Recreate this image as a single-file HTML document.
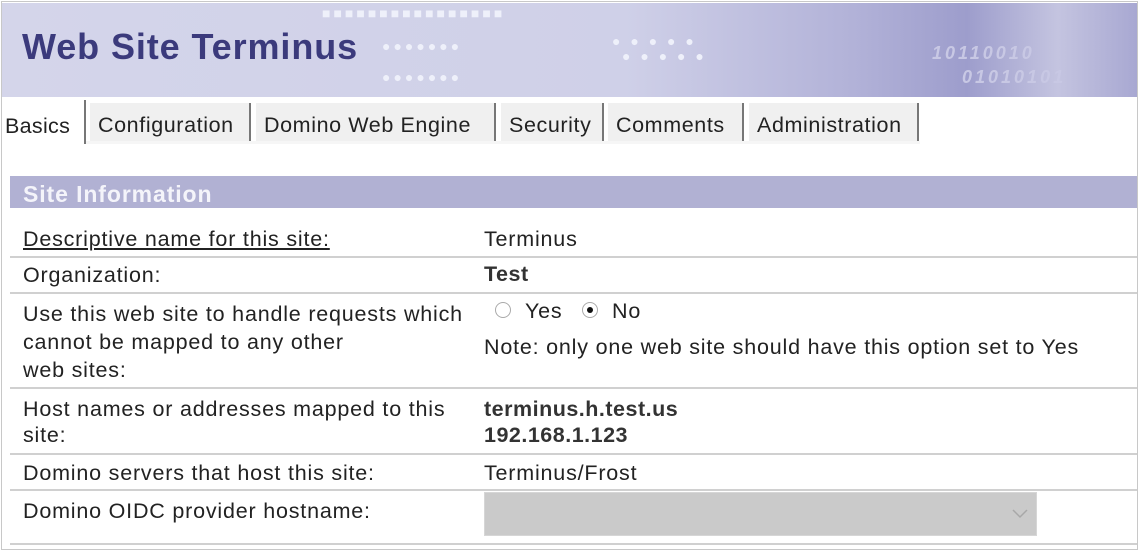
<!DOCTYPE html>
<html><head><meta charset="utf-8"><style>
*{margin:0;padding:0;box-sizing:border-box}
body{width:1140px;height:552px;background:#fff;font-family:"Liberation Sans",Arial,sans-serif;position:relative;overflow:hidden;color:#222}
.frame{position:absolute;left:1px;top:1px;width:1137px;height:549px;border:1px solid #c8c8c8}
.banner{position:absolute;left:2px;top:3px;width:1135px;height:94px;background:linear-gradient(90deg,#d4d5ea 0%,#cfd0e8 55%,#b2b2d8 75%,#9d9dcc 85%,#c4c4e0 93%,#a8a8d2 100%)}
.dots{position:absolute;color:#eef0fa;font-size:14px;letter-spacing:3px;font-weight:bold}
.title{position:absolute;left:22px;top:26px;font-size:36px;letter-spacing:0.9px;font-weight:bold;color:#3b3a7c}
.tab{position:absolute;top:103px;height:38px;background:#f0f0f0;font-size:21.5px;letter-spacing:0.6px;line-height:44px;padding-left:8px;border-right:2px solid #777;color:#222;white-space:nowrap;overflow:hidden}
.bar{position:absolute;left:10px;top:176px;width:1127px;height:32px;background:#b1b1d3;color:#f4f4fa;font-size:23px;letter-spacing:0.9px;font-weight:bold;line-height:36px;padding-left:13px}
.line{position:absolute;left:10px;width:1127px;height:2px;background:#d0d0d0}
.t{position:absolute;font-size:21.5px;letter-spacing:0.8px;line-height:26px;white-space:nowrap}
.b{font-weight:bold;color:#333;letter-spacing:0.5px}
.radio{position:absolute;width:16px;height:16px;border-radius:50%;border:1px solid #aaa;background:#fff}
.radio.on::after{content:"";position:absolute;left:4px;top:4px;width:6px;height:6px;border-radius:50%;background:#111}
</style></head><body>
<div class="frame"></div>
<div class="banner">
<div class="dots" style="left:380px;top:35px">●●●●●●●</div>
<div class="dots" style="left:380px;top:66px">●●●●●●●</div>
<div class="dots" style="left:320px;top:2px">■■■■■■■■■■■■■■■■</div>
<div class="dots" style="left:610px;top:30px">● ● ● ● ●</div>
<div class="dots" style="left:620px;top:45px">● ● ● ● ●</div>
<div class="dots" style="left:930px;top:40px;color:#c8c8e4;font-style:italic;font-size:18px">10110010</div>
<div class="dots" style="left:960px;top:64px;color:#c8c8e4;font-style:italic;font-size:18px">01010101</div>
</div>
<div class="title">Web Site Terminus</div>
<div style="position:absolute;left:2px;top:100px;width:84px;height:44px;background:#fff;border-right:2px solid #777"></div>
<div class="t" style="left:5px;top:113px;letter-spacing:0.3px">Basics</div>
<div class="tab" style="left:90px;width:161px">Configuration</div>
<div class="tab" style="left:256px;width:240px">Domino Web Engine</div>
<div class="tab" style="left:501px;width:103px">Security</div>
<div class="tab" style="left:608px;width:136px">Comments</div>
<div class="tab" style="left:749px;width:170px">Administration</div>
<div style="position:absolute;left:86px;top:141px;width:834px;height:3px;background:#f6f6f6"></div>
<div class="bar">Site Information</div>

<div class="t" style="left:23px;top:226px;text-decoration:underline">Descriptive name for this site:</div>
<div class="t" style="left:484px;top:226px">Terminus</div>
<div class="line" style="top:256px"></div>
<div class="t" style="left:23px;top:262px">Organization:</div>
<div class="t b" style="left:484px;top:261px">Test</div>
<div class="line" style="top:292px"></div>
<div class="t" style="left:23px;top:300px;line-height:28px">Use this web site to handle requests which<br>cannot be mapped to any other<br>web sites:</div>
<span class="radio" style="left:495px;top:302px"></span>
<div class="t" style="left:525px;top:298px">Yes</div>
<span class="radio on" style="left:582px;top:302px"></span>
<div class="t" style="left:612px;top:298px">No</div>
<div class="t" style="left:484px;top:334px">Note: only one web site should have this option set to Yes</div>
<div class="line" style="top:387px"></div>
<div class="t" style="left:23px;top:396px">Host names or addresses mapped to this<br>site:</div>
<div class="t b" style="left:484px;top:396px">terminus.h.test.us<br>192.168.1.123</div>
<div class="line" style="top:453px"></div>
<div class="t" style="left:23px;top:460px">Domino servers that host this site:</div>
<div class="t" style="left:484px;top:460px">Terminus/Frost</div>
<div class="line" style="top:489px"></div>
<div class="t" style="left:23px;top:498px">Domino OIDC provider hostname:</div>
<div style="position:absolute;left:484px;top:492px;width:553px;height:44px;background:#cacaca;border:1px solid #d6d6d6">
<svg style="position:absolute;right:8px;top:16px" width="16" height="10"><path d="M1 1 L8 8 L15 1" stroke="#a8a8a8" stroke-width="1.5" fill="none"/></svg></div>
<div class="line" style="top:543px"></div>
</body></html>
